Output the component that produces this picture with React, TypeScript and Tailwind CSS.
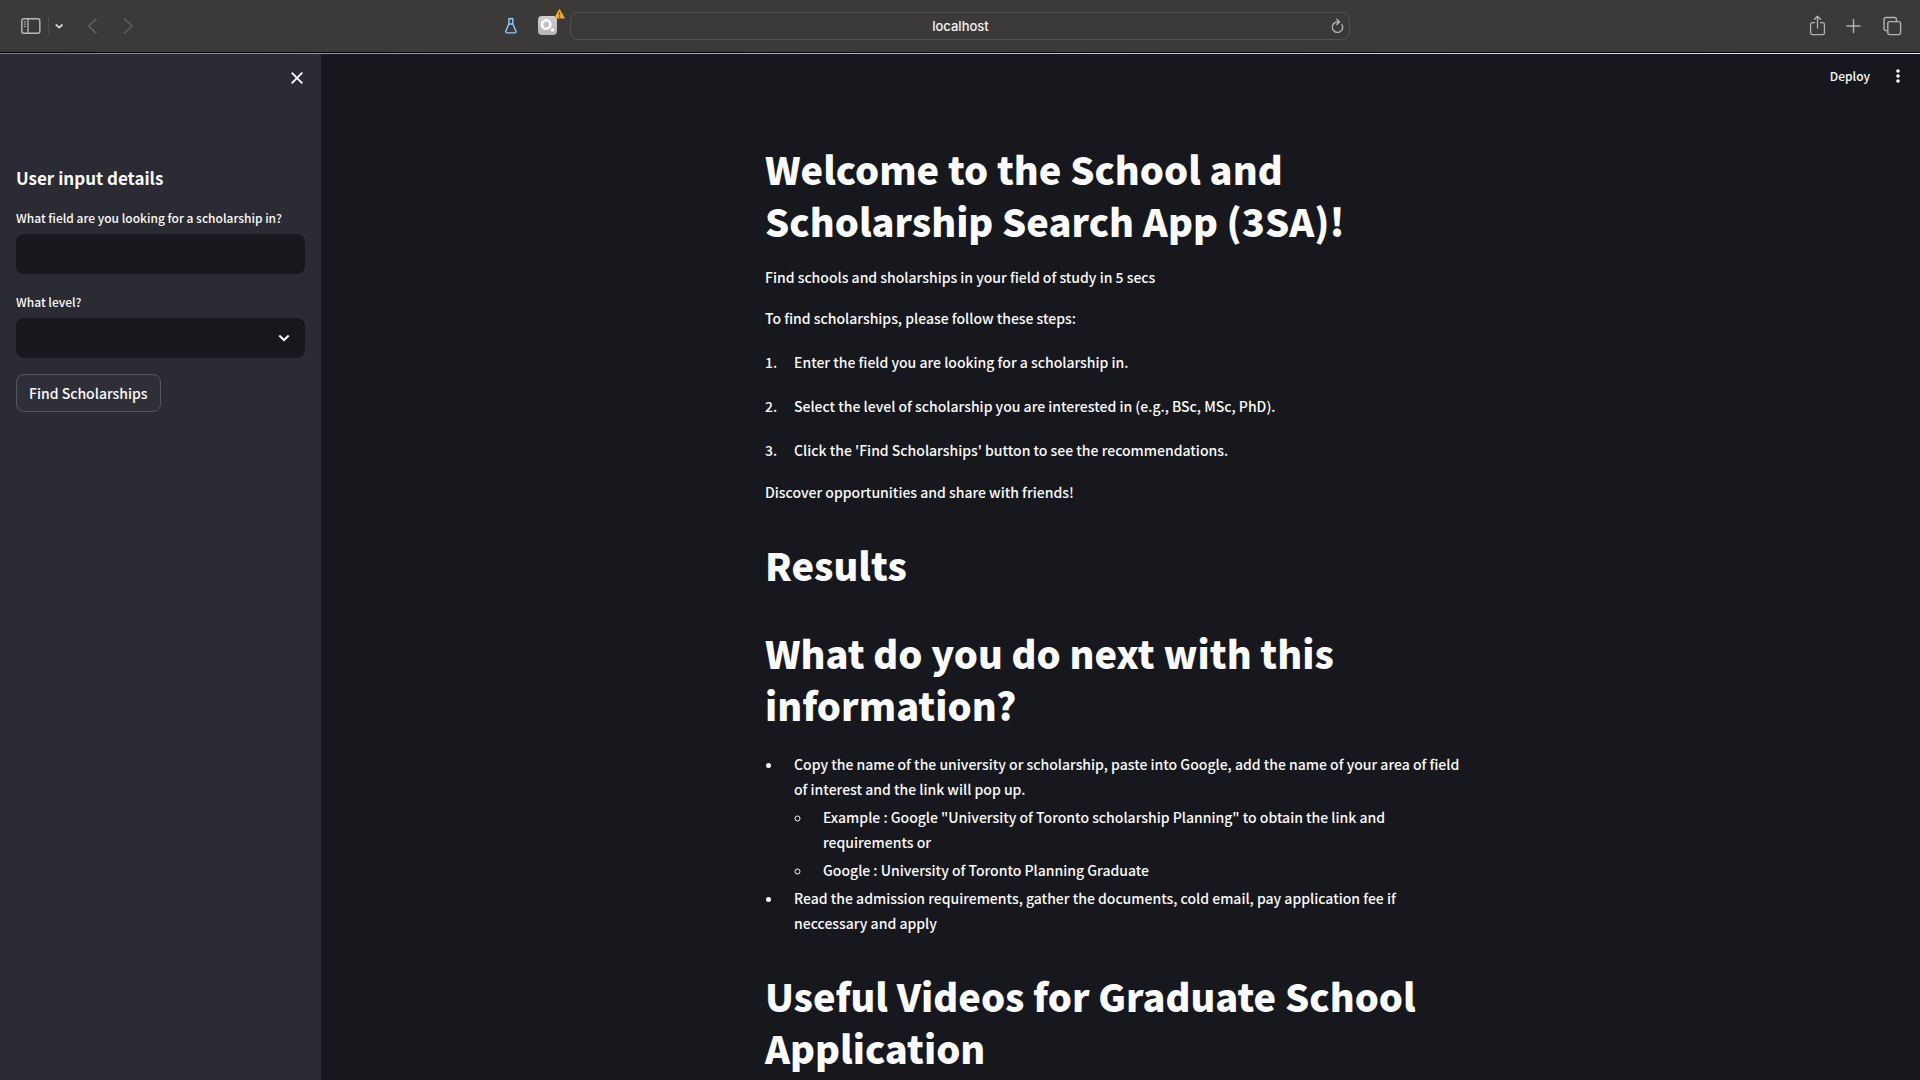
import { useState } from "react";

function BrowserBar() {
  return (
    <header className="grid h-[53px] shrink-0 grid-cols-[1fr_minmax(0,780px)_1fr] items-center border-b border-black bg-[#3b3a38] pb-px">
      <div className="flex items-center justify-between pr-[13px] pl-5">
        <div className="flex items-center">
          <button aria-label="Toggle sidebar" className="text-[#b9b9b7]">
            <svg width="22" height="18" viewBox="0 0 22 18" fill="none" stroke="currentColor">
              <rect x="1.8" y="1.8" width="18" height="14.4" rx="2" strokeWidth="1.4" />
              <path d="M8 2v14" strokeWidth="1.3" />
              <path d="M3.8 4.8h2.2M3.8 7.1h2.2M3.8 9.4h2.2" strokeWidth="1" />
            </svg>
          </button>
          <span className="ml-1.5 h-[18px] w-px bg-[#4d4d4a]" />
          <button aria-label="Sidebar options" className="ml-[5px] text-[#d2d2d0]">
            <svg width="10" height="18" viewBox="0 0 10 18" fill="none" stroke="currentColor" strokeWidth="1.8" strokeLinecap="round" strokeLinejoin="round">
              <path d="M2.3 8l2.9 2.6L8 8" />
            </svg>
          </button>
          <button aria-label="Back" className="ml-[23px] text-[#636361]">
            <svg width="11" height="18" viewBox="0 0 11 18" fill="none" stroke="currentColor" strokeWidth="1.5" strokeLinecap="round" strokeLinejoin="round">
              <path d="M9 2L1.7 9L9 16" />
            </svg>
          </button>
          <button aria-label="Forward" className="ml-6 text-[#636361]">
            <svg width="12" height="18" viewBox="0 0 12 18" fill="none" stroke="currentColor" strokeWidth="1.5" strokeLinecap="round" strokeLinejoin="round">
              <path d="M2.5 2L10 9l-7.500 7" />
            </svg>
          </button>
        </div>
        <div className="flex items-center gap-5">
          <button aria-label="Flask extension" className="text-[#8ccbff]">
            <svg width="14" height="18" viewBox="0 0 14 18" fill="none" stroke="currentColor" strokeWidth="1.4" strokeLinejoin="round">
              <path d="M4.200 1.700h5.200M4.900 2v4.800L1.900 14c-.5 1.300.2 1.900 1.200 1.900h7.500c1 0 1.700-.7 1.200-1.900L8.800 6.800V2M4.700 7h4.200" />
            </svg>
          </button>
          <button aria-label="Search extension" className="relative size-[19px] rounded-[4px] bg-gradient-to-b from-[#cfcfcf] to-[#b4b4b4]">
            <svg width="19" height="19" viewBox="0 0 19 19" fill="none">
              <circle cx="8.200" cy="8.500" r="4.200" stroke="#fff" strokeWidth="2.500" />
              <circle cx="14.500" cy="14" r="1.700" fill="#fff" />
            </svg>
            <svg className="absolute -top-[7px] -right-2" width="11" height="10" viewBox="0 0 11 10">
              <path d="M5.500.6L10.400 9H.6z" fill="#eda92d" stroke="#eda92d" strokeLinejoin="round" />
              <path d="M5.500 3.200v3M5.500 7.200v1.200" stroke="#5d4a20" strokeWidth="1.200" />
            </svg>
          </button>
        </div>
      </div>
      <form className="flex h-7 items-center rounded-lg border border-[#52524f] pr-1" onSubmit={(e) => e.preventDefault()}>
        <input
          aria-label="Address"
          defaultValue="localhost"
          className="min-w-0 flex-1 bg-transparent pl-5 text-center font-['Inter'] text-[13px] leading-5 font-medium text-[#f4f4f3] outline-none"
        />
        <button aria-label="Reload" className="text-[#b2b2b0]">
          <svg width="15" height="18" viewBox="0 0 15 18" fill="none" stroke="currentColor" strokeWidth="1.400" strokeLinecap="round" strokeLinejoin="round">
            <path d="M11.900 7.500A5.200 5.200 0 1 1 7.700 5H9M6.800 2.200L9.500 5 6.800 7.600" />
          </svg>
        </button>
      </form>
      <div className="flex items-center justify-end gap-[19px] pr-[18px] text-[#b2b2b0]">
        <button aria-label="Share">
          <svg width="17" height="22" viewBox="0 0 17 22" fill="none" stroke="currentColor" strokeWidth="1.300" strokeLinecap="round" strokeLinejoin="round">
            <path d="M5.500 7.700H3.400a1.800 1.800 0 0 0-1.800 1.800v8.400c0 1 .8 1.800 1.800 1.800h10.200c1 0 1.800-.8 1.800-1.800V9.500c0-1-.8-1.800-1.800-1.800h-2.100M8.500 13V1.500M5.400 4.300l3.100-3 3.100 3" />
          </svg>
        </button>
        <button aria-label="New tab">
          <svg width="16" height="16" viewBox="0 0 16 16" fill="none" stroke="currentColor" strokeWidth="1.400" strokeLinecap="round">
            <path d="M8.500 1.500v13M2 8h13" />
          </svg>
        </button>
        <button aria-label="Tab overview" className="ml-0.5">
          <svg width="20" height="20" viewBox="0 0 20 20" fill="none" stroke="currentColor" strokeWidth="1.400" strokeLinejoin="round">
            <rect x="5.800" y="5.600" width="12.800" height="13" rx="2" />
            <path d="M5.500 14.600H4a2 2 0 0 1-2-2V3.500a2 2 0 0 1 2-2h8.500a2 2 0 0 1 2 2v1.800" />
          </svg>
        </button>
      </div>
    </header>
  );
}

function Sidebar() {
  const [field, setField] = useState("");
  return (
    <aside className="w-[321px] shrink-0 bg-[#2b2b33] px-4 pt-3">
      <div className="flex justify-end">
        <button aria-label="Close sidebar" className="p-0.5">
          <svg width="12" height="20" viewBox="0 0 12 20" fill="none" stroke="currentColor" strokeWidth="1.900">
            <path d="M.7 4.700l10.600 10.600M11.300 4.700L.7 15.300" />
          </svg>
        </button>
      </div>
      <form className="pt-[76px]" onSubmit={(e) => e.preventDefault()}>
        <h2 className="text-[17px] leading-6 font-bold">User input details</h2>
        <label htmlFor="field" className="mt-4 block text-[12px] leading-6">
          What field are you looking for a scholarship in?
        </label>
        <input
          id="field"
          value={field}
          onChange={(e) => setField(e.target.value)}
          className="mt-1 block h-10 w-full rounded-lg bg-[#17181d] px-3 text-sm outline-none"
        />
        <label htmlFor="level" className="mt-4 block text-[12px] leading-6">
          What level?
        </label>
        <div className="relative mt-1">
          <select id="level" defaultValue="" className="block h-10 w-full appearance-none rounded-lg bg-[#17181d] px-3 text-sm outline-none">
            <option value="" />
            <option>BSc</option>
            <option>MSc</option>
            <option>PhD</option>
          </select>
          <svg className="pointer-events-none absolute top-3 right-[15px]" width="12" height="16" viewBox="0 0 12 16" fill="none" stroke="currentColor" strokeWidth="2">
            <path d="M1.300 5.500L6 10l4.700-4.500" />
          </svg>
        </div>
        <button className="mt-4 h-[38px] rounded-lg border border-[#55555d] bg-[#2f2f38] px-3 text-[14px] font-medium">Find Scholarships</button>
      </form>
    </aside>
  );
}

const steps = [
  "Enter the field you are looking for a scholarship in.",
  "Select the level of scholarship you are interested in (e.g., BSc, MSc, PhD).",
  "Click the 'Find Scholarships' button to see the recommendations.",
];

const heading = "text-[38px] leading-[52px] font-extrabold";

export default function App() {
  return (
    <div className="flex h-screen flex-col overflow-hidden bg-[#17181d] font-['Noto_Sans_CJK_SC',sans-serif] font-medium text-[#fafafa]">
      <BrowserBar />
      <div className="h-px shrink-0 bg-gradient-to-r from-[#e45454] to-[#fff58a]" />
      <div className="flex min-h-0 flex-1">
        <Sidebar />
        <main className="min-w-0 flex-1 overflow-hidden">
          <div className="flex h-11 items-center justify-end gap-[22px] pr-4">
            <button className="text-[12px] font-medium">Deploy</button>
            <button aria-label="Main menu">
              <svg width="12" height="20" viewBox="0 0 12 20" fill="currentColor">
                <circle cx="6" cy="5" r="1.800" />
                <circle cx="6" cy="10" r="1.800" />
                <circle cx="6" cy="15" r="1.800" />
              </svg>
            </button>
          </div>
          <article className="mx-auto max-w-[711px] pt-[45px] text-[14px] leading-[25px]">
            <h1 className={heading}>Welcome to the School and Scholarship Search App (3SA)!</h1>
            <p className="mt-[18px]">Find schools and sholarships in your field of study in 5 secs</p>
            <p className="mt-4">To find scholarships, please follow these steps:</p>
            <ol className="mt-[19px] flex flex-col gap-[19px]">
              {steps.map((s, i) => (
                <li key={s} className="flex">
                  <span className="w-[29px] shrink-0">{i + 1}.</span>
                  {s}
                </li>
              ))}
            </ol>
            <p className="mt-[17px]">Discover opportunities and share with friends!</p>
            <h1 className={`mt-[34px] ${heading}`}>Results</h1>
            <h1 className={`mt-9 ${heading}`}>What do you do next with this information?</h1>
            <ul className="mt-[21px] flex list-disc flex-col gap-[3px] pr-2 pl-[18px]">
              <li className="pl-[11px]">
                Copy the name of the university or scholarship, paste into Google, add the name of your area of field of interest and the link will pop up.
                <ul className="mt-[3px] flex list-[circle] flex-col gap-[3px] pl-[18px]">
                  <li className="pl-[11px]">Example : Google "University of Toronto scholarship Planning" to obtain the link and requirements or</li>
                  <li className="pl-[11px]">Google : University of Toronto Planning Graduate</li>
                </ul>
              </li>
              <li className="pl-[11px]">Read the admission requirements, gather the documents, cold email, pay application fee if neccessary and apply</li>
            </ul>
            <h1 className={`mt-[34px] ${heading}`}>Useful Videos for Graduate School Application</h1>
          </article>
        </main>
      </div>
    </div>
  );
}
